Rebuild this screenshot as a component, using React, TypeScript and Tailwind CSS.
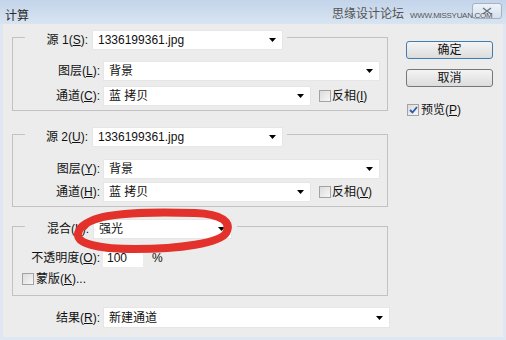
import React from "react";

const Arrow = () => (
  <svg width="7" height="4" viewBox="0 0 7 4" className="shrink-0">
    <path d="M0 0 H7 L3.5 4 Z" fill="#000" />
  </svg>
);

function Dropdown({ w, text, h = "h-[20px]" }: { w: string; text: string; h?: string }) {
  return (
    <div className={`${w} ${h} bg-white border border-[#e6e6e6] flex items-center justify-between pl-[5px] pr-[6px] shrink-0`}>
      <span className="text-[12px] text-[#111] leading-none">{text}</span>
      <Arrow />
    </div>
  );
}

function Check({ checked = false }: { checked?: boolean }) {
  return (
    <div className="w-[12px] h-[12px] border border-[#a3a3a3] bg-gradient-to-br from-[#dcdcdc] to-[#f7f7f7] flex items-center justify-center shrink-0">
      {checked && (
        <svg width="9" height="8" viewBox="0 0 9 8">
          <path d="M1 4 L3.5 6.5 L8 1" stroke="#2b58a8" strokeWidth="1.8" fill="none" />
        </svg>
      )}
    </div>
  );
}

function Label({ children, w = "w-[90px]" }: { children: React.ReactNode; w?: string }) {
  return <span className={`${w} text-right pr-[3px] text-[12px] text-[#111] shrink-0`}>{children}</span>;
}

function SourceGroup({
  n,
  keyS,
  keyL,
  keyC,
  keyI,
  cls,
  gap,
}: {
  n: string;
  keyS: string;
  keyL: string;
  keyC: string;
  keyI: string;
  cls: string;
  gap: string;
}) {
  return (
    <fieldset className={`${cls} w-[376px] border border-[#c2c2c2]`}>
      <legend className="ml-[12px] pr-[4px] pt-[6px] flex items-center">
        <span className="w-[67px] text-right pr-[4px] text-[12px] text-[#111]">
          源 {n}(<u>{keyS}</u>):
        </span>
        <Dropdown w="w-[191px]" text="1336199361.jpg" />
      </legend>
      <div className={`flex flex-col ${gap}`}>
        <div className="flex items-center">
          <Label>
            图层(<u>{keyL}</u>):
          </Label>
          <Dropdown w="w-[277px]" text="背景" />
        </div>
        <div className="flex items-center">
          <Label>
            通道(<u>{keyC}</u>):
          </Label>
          <Dropdown w="w-[208px]" text="蓝 拷贝" />
          <div className="ml-[8px] flex items-center gap-[1px]">
            <Check />
            <span className="text-[12px] text-[#111]">
              反相(<u>{keyI}</u>)
            </span>
          </div>
        </div>
      </div>
    </fieldset>
  );
}

export default function App() {
  return (
    <div className="relative w-[506px] h-[340px] overflow-hidden bg-[#dfe8f2] flex flex-col font-['Liberation_Sans','Noto_Sans_CJK_SC',sans-serif]">
      {/* title bar */}
      <div className="h-[24px] shrink-0 bg-gradient-to-b from-[#c3d4ea] to-[#d8e4f1] pl-[5px] pt-[3px]">
        <span className="text-[12px] text-[#2a2a2a]">计算</span>
      </div>
      <div className="absolute left-[472px] top-[3px] w-[30px] h-[16px] rounded-[3px] border border-[#a3b2c6] bg-gradient-to-b from-[#eef3f9] to-[#d6e0ec] flex items-center justify-center">
        <svg width="10" height="8" viewBox="0 0 10 8">
          <path d="M1 1 L9 7 M9 1 L1 7" stroke="#6a7480" strokeWidth="1.4" />
        </svg>
      </div>
      <div className="absolute z-10 left-[332px] top-[6px] flex items-end whitespace-nowrap">
        <span className="text-[12px] text-[#555] leading-[16px]">思缘设计论坛</span>
        <span className="ml-[6px] text-[8px] text-[#555] leading-[13px] tracking-[-0.3px]">WWW.MISSYUAN.COM</span>
      </div>

      {/* body */}
      <div className="flex-1 mx-[3px] mb-[3px] bg-[#ececec] flex">
        <div className="w-[385px] pl-[9px] flex flex-col shrink-0">
          <SourceGroup n="1" keyS="S" keyL="L" keyC="C" keyI="I" cls="pt-[11px] pb-[4px]" gap="gap-[5px]" />
          <SourceGroup n="2" keyS="U" keyL="Y" keyC="H" keyI="V" cls="mt-[10px] pt-[12px] pb-[4px]" gap="gap-[3px]" />

          <fieldset className="mt-[6px] w-[376px] border border-[#c2c2c2] pt-[10px] pb-[7px]">
            <legend className="ml-[12px] pr-[5px] pt-[6px] flex items-center">
              <span className="w-[68px] text-right pr-[4px] text-[12px] text-[#111]">
                混合(<u>L</u>):
              </span>
              <Dropdown w="w-[139px]" text="强光" />
            </legend>
            <div className="flex flex-col gap-[3px]">
              <div className="flex items-center">
                <Label>
                  不透明度(<u>O</u>):
                </Label>
                <div className="w-[40px] h-[18px] bg-white flex items-center pl-[4px] text-[12px] text-[#111]">
                  100
                </div>
                <span className="ml-[9px] text-[12px] text-[#111]">%</span>
              </div>
              <div className="flex items-center pl-[9px] gap-[2px]">
                <Check />
                <span className="text-[12px] text-[#111]">
                  蒙版(<u>K</u>)...
                </span>
              </div>
            </div>
          </fieldset>

          <div className="mt-[11px] flex items-center">
            <Label w="w-[91px]">
              结果(<u>R</u>):
            </Label>
            <Dropdown w="w-[287px]" h="h-[21px]" text="新建通道" />
          </div>
        </div>

        <div className="pl-[18px] pt-[17px] flex flex-col">
          <div className="w-[87px] h-[18px] rounded-[3px] border border-[#3d7fb3] bg-gradient-to-b from-[#f4f4f4] to-[#dcdcdc] flex items-center justify-center text-[12px] text-[#111]">
            确定
          </div>
          <div className="mt-[10px] w-[87px] h-[18px] rounded-[3px] border border-[#777] bg-gradient-to-b from-[#f4f4f4] to-[#dcdcdc] flex items-center justify-center text-[12px] text-[#111]">
            取消
          </div>
          <div className="mt-[14px] ml-[1px] flex items-center gap-[2px]">
            <Check checked />
            <span className="text-[12px] text-[#111]">
              预览(<u>P</u>)
            </span>
          </div>
        </div>
      </div>

      {/* red annotation */}
      <svg className="absolute left-0 top-0 pointer-events-none" width="506" height="340" viewBox="0 0 506 340">
        <path
          d="M84 226 C92 214, 140 211, 195 213 C222 214, 232 222, 226 233 C220 243, 180 249, 135 249 C100 249, 78 244, 78 235 C78 228, 85 222, 100 218"
          stroke="#e3322b"
          strokeWidth="8"
          fill="none"
          strokeLinecap="round"
        />
      </svg>
    </div>
  );
}
